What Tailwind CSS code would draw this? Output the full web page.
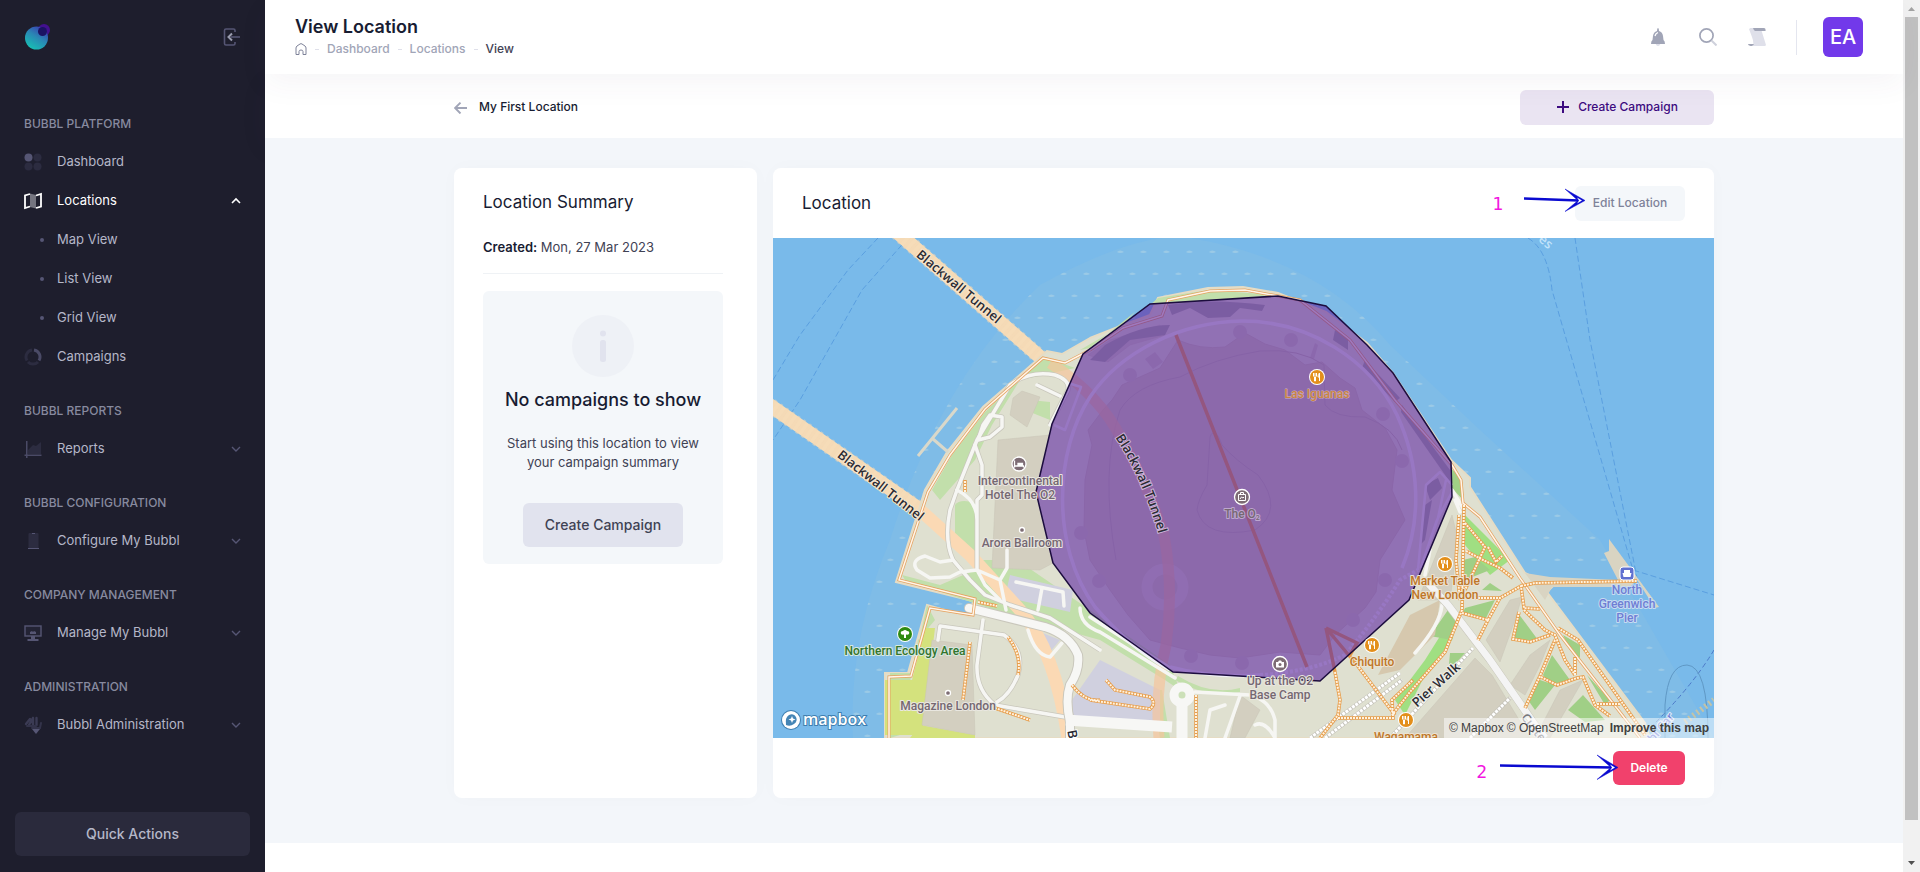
<!DOCTYPE html>
<html lang="en">
<head>
    <meta charset="UTF-8">
    <meta name="viewport" content="width=device-width, initial-scale=1.0">
    <title>View Location</title>
    <script src="https://cdn.jsdelivr.net/npm/@tailwindcss/browser@4"></script>
</head>
<body class="flex min-h-screen bg-white font-['Inter',sans-serif] text-[13px] text-[#181c32]">

    <!-- Sidebar -->
    <aside class="flex w-[265px] shrink-0 flex-col bg-[#1e1e2d]">
        <div class="flex h-[74px] items-center justify-between pr-6 pl-6">
            <a href="#" aria-label="Bubbl">
                <svg class="h-7 w-7" viewBox="0 0 28 28">
                    <defs>
                        <linearGradient id="logo" x1="0.2" y1="1" x2="0.8" y2="0">
                            <stop offset="0" stop-color="#16c5b4"/>
                            <stop offset="0.55" stop-color="#2a86b4"/>
                            <stop offset="1" stop-color="#3c34b0"/>
                        </linearGradient>
                    </defs>
                    <circle cx="20" cy="7" r="6" fill="#43108f"/>
                    <circle cx="12.500" cy="15" r="11.500" fill="url(#logo)"/>
                    <circle cx="18.500" cy="8.500" r="4.500" fill="#1b1263"/>
                </svg>
            </a>
            <button type="button" aria-label="Collapse menu">
                <svg class="h-[18px] w-[18px]" viewBox="0 0 18 18" fill="none">
                    <path d="M12 4V2.500Q12 1 10.500 1H3Q1.500 1 1.500 2.500V15.500Q1.500 17 3 17H10.500Q12 17 12 15.500V14" stroke="#565674" stroke-width="1.600"/>
                    <path d="M8 9h9" stroke="#565674" stroke-width="1.600"/>
                    <path d="M9 5.500 5.500 9 9 12.500" stroke="#9a9cae" stroke-width="2"/>
                </svg>
            </button>
        </div>

        <nav class="flex-1 pt-[15px] text-[#b5b7c8]">
            <h2 class="px-6 pt-[25px] pb-2 text-xs leading-5 font-medium text-[#878a9f]">BUBBL PLATFORM</h2>
            <a href="#" class="flex h-[39px] items-center px-6">
                <svg class="mr-[15px] h-[18px] w-[18px]" viewBox="0 0 18 18" fill="#2c2c40"><circle cx="4.500" cy="4.500" r="4" fill="#565674"/><circle cx="13.500" cy="4.500" r="4"/><circle cx="4.500" cy="13.500" r="4"/><circle cx="13.500" cy="13.500" r="4"/></svg>
                Dashboard
            </a>
            <a href="#" class="flex h-[39px] items-center px-6 text-white">
                <svg class="mr-[15px] h-[18px] w-[18px]" viewBox="0 0 18 18" fill="none"><path d="M6 1.500 12 3V16.500L6 15Z" fill="#74747f"/><path d="M6 2 1 3.500V16L6 14.500M12 3.500 17 2V14.500L12 16" stroke="#fff" stroke-width="1.800"/></svg>
                <span class="flex-1">Locations</span>
                <svg class="h-2 w-[10px]" viewBox="0 0 10 8" fill="none" stroke="#fff" stroke-width="1.600"><path d="M1 6l4-4 4 4"/></svg>
            </a>
            <a href="#" class="flex h-[39px] items-center gap-[13px] pl-10"><span class="h-1 w-1 rounded-full bg-[#565674]"></span>Map View</a>
            <a href="#" class="flex h-[39px] items-center gap-[13px] pl-10"><span class="h-1 w-1 rounded-full bg-[#565674]"></span>List View</a>
            <a href="#" class="flex h-[39px] items-center gap-[13px] pl-10"><span class="h-1 w-1 rounded-full bg-[#565674]"></span>Grid View</a>
            <a href="#" class="flex h-[39px] items-center px-6">
                <svg class="mr-[15px] h-[18px] w-[18px]" viewBox="0 0 18 18" fill="none" stroke-width="3"><path d="M10 2A7 7 0 0 1 15 12.500" stroke="#4a4a66"/><path d="M14 14A7 7 0 0 1 4 14" stroke="#2c2c40"/><path d="M3 12.500A7 7 0 0 1 8 2" stroke="#2c2c40"/></svg>
                Campaigns
            </a>

            <h2 class="px-6 pt-[25px] pb-2 text-xs leading-5 font-medium text-[#878a9f]">BUBBL REPORTS</h2>
            <a href="#" class="flex h-[39px] items-center px-6">
                <svg class="mr-[15px] h-[18px] w-[18px]" viewBox="0 0 18 18"><path d="M4 14V10L9 5 12 6 17 2V14Z" fill="#2c2c40"/><path d="M2 1h1.500v13.500H17.500V16H3.500v2H2V16H.500V14.500H2Z" fill="#4a4a66"/></svg>
                <span class="flex-1">Reports</span>
                <svg class="h-2 w-[10px]" viewBox="0 0 10 8" fill="none" stroke="#565674" stroke-width="1.400"><path d="M1 2l4 4 4-4"/></svg>
            </a>

            <h2 class="px-6 pt-[25px] pb-2 text-xs leading-5 font-medium text-[#878a9f]">BUBBL CONFIGURATION</h2>
            <a href="#" class="flex h-[39px] items-center px-6">
                <svg class="mr-[15px] h-[18px] w-[18px]" viewBox="0 0 18 18"><rect x="4.500" y="1" width="10" height="16" rx="1" fill="#2c2c40"/><path d="M4 16h11v1H4ZM8 1h3v1H8Z" fill="#565674"/></svg>
                <span class="flex-1">Configure My Bubbl</span>
                <svg class="h-2 w-[10px]" viewBox="0 0 10 8" fill="none" stroke="#565674" stroke-width="1.400"><path d="M1 2l4 4 4-4"/></svg>
            </a>

            <h2 class="px-6 pt-[25px] pb-2 text-xs leading-5 font-medium text-[#878a9f]">COMPANY MANAGEMENT</h2>
            <a href="#" class="flex h-[39px] items-center px-6">
                <svg class="mr-[15px] h-[18px] w-[18px]" viewBox="0 0 18 18" fill="none"><rect x="1" y="2" width="16" height="10" fill="#232334" stroke="#565674" stroke-width="1.400"/><path d="M6 10V8l2-1 1 1 1-1 2 1v2Z" fill="#565674"/><path d="M7 12h4v3h3.500V17h-11v-2H7Z" fill="#565674"/></svg>
                <span class="flex-1">Manage My Bubbl</span>
                <svg class="h-2 w-[10px]" viewBox="0 0 10 8" fill="none" stroke="#565674" stroke-width="1.400"><path d="M1 2l4 4 4-4"/></svg>
            </a>

            <h2 class="px-6 pt-[25px] pb-2 text-xs leading-5 font-medium text-[#878a9f]">ADMINISTRATION</h2>
            <a href="#" class="flex h-[39px] items-center px-6">
                <svg class="mr-[15px] h-[18px] w-[18px]" viewBox="0 0 18 18" fill="none" stroke-linecap="round"><path d="M2 8 6 3M5 9 9 2M9 9V2M12.500 9V2" stroke="#3b3b54" stroke-width="2.400"/><path d="M8 12H16L17 7M3 10H12" stroke="#33334a" stroke-width="2"/><path d="M8 13h8l-4 5Z" fill="#565674"/></svg>
                <span class="flex-1">Bubbl Administration</span>
                <svg class="h-2 w-[10px]" viewBox="0 0 10 8" fill="none" stroke="#565674" stroke-width="1.400"><path d="M1 2l4 4 4-4"/></svg>
            </a>
        </nav>

        <div class="px-[15px] pb-4">
            <button type="button" class="h-11 w-full rounded-md bg-[#2a2a3c] text-sm font-medium text-[#b5b7c8]">Quick Actions</button>
        </div>
    </aside>

    <!-- Page -->
    <div class="flex min-w-0 flex-1 flex-col">
        <header class="relative z-10 flex h-[74px] items-center justify-between bg-white pr-10 pl-[30px] shadow-[0_10px_30px_0_rgba(82,63,105,0.05)]">
            <div>
                <h1 class="text-lg leading-6 font-semibold">View Location</h1>
                <nav aria-label="Breadcrumb" class="flex h-[21px] items-center gap-[6px] text-xs font-medium text-[#a1a5b7]">
                    <a href="#" aria-label="Home"><svg class="h-3 w-3" viewBox="0 0 12 12" fill="none" stroke="#7e8299"><path d="M1 5Q1 4 2 3L5 1Q6 .300 7 1L10 3Q11 4 11 5V11.500H8V8.500Q8 7 6 7T4 8.500V11.500H1Z"/></svg></a>
                    <span class="mx-[2px] h-px w-1 bg-[#dfe0ea]"></span>
                    <a href="#">Dashboard</a>
                    <span class="mx-[2px] h-px w-1 bg-[#dfe0ea]"></span>
                    <a href="#">Locations</a>
                    <span class="mx-[2px] h-px w-1 bg-[#dfe0ea]"></span>
                    <span class="text-[#3f4254]">View</span>
                </nav>
            </div>
            <div class="flex items-center">
                <button type="button" aria-label="Notifications" class="mr-[33px]">
                    <svg class="h-[18px] w-4" viewBox="0 0 16 18"><path d="M5.500 15h5Q10 18 8 18T5.500 15Z" fill="#dfe0ea"/><path d="M8 0Q9 0 9 3Q12.500 4 13 8L13.500 12Q15 13 15 16H1Q1 13 2.500 12L3 8Q3.500 4 7 3Q7 0 8 0Z" fill="#a1a5b7"/><path d="M5 8Q5.500 5.500 8 4.500" stroke="#fff" stroke-width="1.300" fill="none"/></svg>
                </button>
                <button type="button" aria-label="Search" class="mr-[31px]">
                    <svg class="h-[18px] w-[18px]" viewBox="0 0 18 18" fill="none"><circle cx="7.500" cy="7.500" r="6.600" stroke="#a1a5b7" stroke-width="1.700"/><path d="m12.500 12.500 5 5" stroke="#cfd1dc" stroke-width="2"/></svg>
                </button>
                <button type="button" aria-label="Activity" class="mr-[30px]">
                    <svg class="h-[18px] w-[18px]" viewBox="0 0 18 18"><path d="M1 1Q3-1 7 0L13 1 18 17Q17 19 14 18H5Q6 14 4 9Z" fill="#dfe0ea"/><path d="M5 0H16Q18 0 17.500 3H7Q6 3 5 0ZM0 16H6Q5 18.500 2.500 18T0 16Z" fill="#a1a5b7"/></svg>
                </button>
                <div class="mr-[26px] h-[35px] w-px bg-[#e4e6ef]"></div>
                <button type="button" class="h-10 w-10 rounded-md bg-[#7239ea] text-xl font-medium text-white">EA</button>
            </div>
        </header>

        <div class="bg-white px-5 shadow-[0_10px_30px_0_rgba(82,63,105,0.05)]">
            <div class="mx-auto flex h-16 max-w-[1260px] items-center justify-between pt-[2px]">
                <a href="#" class="flex items-center gap-3 text-xs font-medium">
                    <svg class="h-[13px] w-[13px]" viewBox="0 0 12 12" fill="none" stroke="#a1a5b7" stroke-width="1.800"><path d="M12 6.500H1M6 1.500l-5 5 5 5"/></svg>
                    My First Location
                </a>
                <button type="button" class="flex h-[35px] w-[194px] items-center justify-center gap-2 rounded-md bg-[#eae4f2] text-xs font-medium text-[#3d0b80]">
                    <svg class="h-[14px] w-[14px]" viewBox="0 0 14 14" stroke="#3d0b80" stroke-width="2"><path d="M7 1v12M1 7h12"/></svg>
                    Create Campaign
                </button>
            </div>
        </div>

        <main class="bg-[#f3f6fa] px-5 pt-[30px] pb-[45px]">
            <div class="mx-auto grid max-w-[1260px] grid-cols-4 gap-4">
                <section class="rounded-lg bg-white pt-[21px] pr-[34px] pl-[29px] shadow-[0_0_20px_0_rgba(76,87,125,0.02)]">
                    <h2 class="text-[17px] leading-[26px]">Location Summary</h2>
                    <p class="mt-[22px] leading-5 text-[#3f4254]"><strong class="font-semibold text-[#181c32]">Created:</strong> Mon, 27 Mar 2023</p>
                    <hr class="mt-4 border-[#eff2f5]">
                    <div class="mt-[17px] flex flex-col items-center rounded-md bg-[#f4f7fa] px-4 pt-6 pb-[17px] text-center">
                        <svg class="h-[62px] w-[62px]" viewBox="0 0 62 62"><circle cx="31" cy="31" r="31" fill="#eef1f6"/><circle cx="31" cy="18.500" r="3" fill="#e1e3ee"/><rect x="28" y="25" width="6" height="22" rx="2.500" fill="#e1e3ee"/></svg>
                        <h3 class="mt-[11px] text-lg leading-6 font-medium">No campaigns to show</h3>
                        <p class="mt-[22px] leading-[19px] text-[#3f4254]">Start using this location to view<br>your campaign summary</p>
                        <button type="button" class="mt-[31px] h-11 w-40 rounded-md bg-[#e1e3ee] text-sm font-medium text-[#3f4254]">Create Campaign</button>
                    </div>
                </section>

                <section class="col-span-3 rounded-lg bg-white shadow-[0_0_20px_0_rgba(76,87,125,0.02)]">
                    <div class="relative flex h-[70px] items-center justify-between pr-[29px] pl-[29px]">
                        <h2 class="text-[17px] leading-[26px]">Location</h2>
                        <button type="button" class="h-[35px] w-[110px] rounded-md bg-[#f4f7fa] text-xs font-medium text-[#7e8299]">Edit Location</button>
                        <span class="absolute top-6 right-[211px] font-['DejaVu_Sans_Mono',monospace] text-lg leading-6 text-[#f216e0]">1</span>
                        <svg class="absolute top-5 right-[128px] h-6 w-[62px]" viewBox="0 0 62 24" fill="none"><path d="M0 10.500 55 12.500" stroke="#0a0ad0" stroke-width="2.500"/><path d="M41 1 61 12.500 41 23.500 54 12.500Z" fill="#0a0ad0" stroke="#0a0ad0" stroke-width="0.500"/><path d="m53 9.500 5 3-5 3 2-3Z" fill="#fff"/></svg>
                    </div>

                    <!-- Map -->
                    <div class="relative h-[500px] overflow-hidden bg-[#79baea]">
                        <svg class="h-full w-full" viewBox="773 238 941 500" preserveAspectRatio="xMidYMid slice" role="img" aria-label="Map of the location">
                            <defs>
                                <pattern id="mud" x="0" y="0" width="23" height="44" patternUnits="userSpaceOnUse">
                                    <path d="M2 10Q5 7 9 10Q5 12 2 10ZM13 32Q16 29 20 32Q16 34 13 32Z" fill="#a3cde6" opacity="0.8"/>
                                </pattern>
                                <g id="food">
                                    <circle r="8" fill="#fff"/><circle r="7" fill="#e38f1b"/>
                                    <path d="M-3.500-4v3l1 1v4h1V0l1-1V-4M-2-4v3M2.500 4V-4Q1-3 1 0H2.500" stroke="#fff" fill="none"/>
                                </g>
                                <path id="tunnel" d="M1110 430Q1143 476 1161 543"/>
                            </defs>

                            <!-- River shallows -->
                            <path d="M853 738Q848 640 890 540Q940 380 1040 285Q1140 230 1190 238Q1320 260 1390 345L1480 430L1600 540L1714 738Z" fill="#7fbce7"/>
                            <path d="M853 738Q848 640 890 540Q940 380 1040 285Q1140 230 1190 238Q1320 260 1390 345L1480 430L1600 540L1714 738Z" fill="url(#mud)"/>
                            <g fill="none" stroke="#5a9fe0" stroke-dasharray="6 3">
                                <path d="M878 238L848 270L800 335L773 380M908 238L862 290L800 400L773 440"/>
                                <path d="M1528 238Q1548 250 1552 290L1633 570L1714 595M1575 238L1590 340L1637 578"/>
                            </g>
                            <path d="M1714 650Q1690 690 1640 738" fill="none" stroke="#4c79c9" stroke-dasharray="5 3"/>
                            <path d="M1665 738V705Q1668 665 1687 665Q1708 666 1708 738" fill="none" stroke="#5f98c5"/>
                            <path d="M1685 722L1714 700" fill="none" stroke="#c5c3a5" stroke-width="6" stroke-dasharray="2 3"/>

                            <!-- Tunnel approaches over the water -->
                            <path d="M897 232L1064 378M765 402L925 513" stroke="#f6dcb8" stroke-width="14" fill="none"/>
                            <path d="M897 232L1064 378M765 402L925 513" stroke="#f3d8b4" stroke-width="16" stroke-dasharray="3 4" fill="none" opacity="0.500"/>

                            <!-- Land -->
                            <path d="M1090 338L1062 354L1047 351L1037 360L983 407L947 452L925 490L896 582L973 601L970 617L927 605L908 673H885V738H1650L1645 723L1547 592L1552 587L1525 573L1470 487V478L1451 460L1393 373L1367 343L1326 312L1278 293L1243 287L1208 288L1158 298L1150 315L1123 325Z" fill="#dfe0d0" stroke="#e6dcc4" stroke-width="2"/>
                            <path d="M1525 573L1550 577L1618 580L1604 553L1609 551V539L1659 607L1655 608L1637 580L1630 587L1552 587L1545 600Z" fill="#d9d4c2"/>

                            <!-- Parks -->
                            <g fill="#c2dfab">
                                <path d="M1044 357L1075 368L1020 380L992 425L975 460L940 500L932 490L952 455L985 412Z"/>
                                <path d="M955 505Q960 498 975 503V565L955 545Z"/>
                                <path d="M902 575L940 585L1010 555L1090 610L1170 665L1180 690L1165 680L1100 640L1010 615L905 580Z"/>
                                <path d="M1158 298L1208 290L1275 295L1150 305ZM1080 350L1123 325L1135 312L1090 348Z"/>
                                <path d="M980 560L990 575L1000 580V560Z"/>
                                <path d="M1030 400L1050 402V420L1030 412ZM1152 690H1162L1170 738H1160Z"/>
                                <path d="M1178 676Q1210 696 1240 688V692Q1205 698 1175 680Z"/>
                                <path d="M927 605L912 673H890V738L900 735L918 640L935 620Z"/>
                            </g>
                            <path d="M925 628H935L922 735H885V680H912Z" fill="#d4e27d"/>
                            <path d="M920 725L975 735V738H910Z" fill="#d4e27d"/>
                            <g fill="#a0cf86">
                                <path d="M1465 515L1510 560L1490 575L1465 545Z" fill="#a0df82"/>
                                <path d="M1463 560L1475 557L1490 570L1465 580ZM1482 590L1490 583L1502 591Z"/>
                                <path d="M1465 608L1495 600L1485 620L1462 614Z"/>
                                <path d="M1447 625L1458 615L1452 640L1425 675L1405 715L1395 700L1425 660Z" fill="#a0df82"/>
                                <path d="M1518 613L1538 640L1514 640ZM1552 655L1570 680L1550 685L1543 675ZM1540 680L1555 685L1535 710L1528 700ZM1583 695L1605 720L1585 722L1568 710ZM1450 653H1465L1455 664H1449ZM1563 635L1580 645V658L1570 650ZM1587 675L1610 700L1605 705Z"/>
                                <path d="M1451 468L1462 480L1463 500L1452 488ZM1448 610L1460 615L1452 640L1430 636Z"/>
                            </g>

                            <!-- Buildings and yards -->
                            <g fill="#d3cfc0" stroke="#c9c5b6" stroke-width="0.500">
                                <path d="M1013 398L1022 391L1040 397L1027 427L1010 415Z"/>
                                <path d="M998 440L1050 435L1036 492L1053 563L1040 570L992 568Z"/>
                                <path d="M932 640L972 645L975 735L922 725Z"/>
                                <path d="M1486 640L1510 600L1522 597L1515 620L1500 662Z"/>
                                <path d="M1525 695L1510 685L1530 655L1550 640L1540 665Z"/>
                                <path d="M1535 738L1560 690L1583 680L1560 720L1550 738Z"/>
                                <path d="M1240 695L1260 710L1245 738H1230ZM1405 738L1475 658L1492 675L1530 738ZM1418 600L1452 515L1458 540L1450 600Z"/>
                                <path d="M1088 355L1110 340L1160 325L1165 335L1130 345L1108 362Z"/>
                            </g>
                            <path d="M1378 675L1410 615L1440 600L1435 635L1400 670Z" fill="#d6c8ae"/>
                            <g fill="#d0d0df">
                                <path d="M1010 575L1073 590L1070 612L1005 597ZM1072 700L1100 660L1160 690V725L1068 715Z"/>
                                <path d="M1035 630L1060 640L1045 658Q1030 650 1035 630Z"/>
                            </g>

                            <!-- Arena -->
                            <path d="M1085 480L1092 445L1088 430L1103 410L1112 400L1122 385L1160 368L1178 340Q1200 350 1225 347L1245 333L1265 344L1285 350L1305 365L1322 362L1340 378L1355 388L1362 410L1385 428L1397 450L1392 490L1405 520L1380 560L1376 592L1365 608L1335 635L1320 655L1280 652L1240 658L1210 655L1180 648L1150 640L1128 615L1110 590L1090 560L1084 530Z" fill="#d2cdb9" stroke="#cdc6b4"/>
                            <g fill="#cfcabf">
                                <circle cx="1240" cy="332" r="7"/><circle cx="1291" cy="340" r="7"/><circle cx="1130" cy="375" r="7"/><circle cx="1383" cy="414" r="7"/><circle cx="1402" cy="461" r="7"/><circle cx="1099" cy="581" r="7"/><circle cx="1191" cy="656" r="7"/><circle cx="1242" cy="663" r="7"/><circle cx="1353" cy="620" r="7"/><circle cx="1385" cy="580" r="7"/><circle cx="1081" cy="533" r="7"/>
                                <path d="M1145 359L1155 352L1163 362L1153 369ZM1310 358L1315 343L1318 345L1314 359Z"/>
                            </g>
                            <path d="M1168 305Q1210 298 1265 305L1262 311L1240 308L1230 317L1208 318L1190 308L1172 315ZM1105 345Q1140 325 1170 325L1165 335L1130 340L1105 362L1090 360ZM1335 330L1348 338V350L1333 340ZM1365 360L1400 398L1395 402L1362 368ZM1402 405L1450 470V482L1401 412Z" fill="#a9aea4"/>
                            <path d="M1425 485L1438 478L1442 488L1430 500ZM1425 505L1432 500L1425 540L1420 545Z" fill="#a9aea4"/>
                            <circle cx="1165" cy="587" r="18" fill="none" stroke="#dcd8ca" stroke-width="11"/>
                            <g fill="none" stroke="#c3bcae">
                                <path d="M1116 560Q1100 470 1120 410Q1135 385 1180 377Q1215 358 1260 351Q1300 348 1324 365L1325 405Q1335 418 1365 417Q1395 428 1402 450"/>
                                <path d="M1207 485L1210 437Q1215 425 1222 445Q1235 460 1258 475Q1285 510 1255 530Q1205 540 1197 510Q1198 500 1207 485Z"/>
                            </g>

                            <!-- Tunnel under the arena -->
                            <path d="M1050 363Q1100 395 1122 440Q1150 490 1164 535Q1174 590 1166 645Q1155 690 1159 738" fill="none" stroke="#f5c59c" stroke-width="11" opacity="0.700"/>
                            <path d="M920 510L970 555L1020 610Q1055 650 1068 738" fill="none" stroke="#fbd9b4" stroke-width="13"/>

                            <!-- Roads -->
                            <g fill="none" stroke="#c9c7bc" stroke-width="5" stroke-linejoin="round">
                                <path d="M957 490Q965 470 977 440L1010 385Q1030 370 1055 375Q1070 380 1068 390L1050 425M1037 385L1060 396"/>
                                <path d="M978 440L983 425L990 415L1002 417V427L990 437L978 440M975 445L982 465V495L977 500V570"/>
                                <path d="M957 490L950 510Q944 540 953 560L970 580L985 595L1010 605L1050 618L1100 650M983 620L977 665Q976 690 995 705L1065 717M938 640L940 626L1004 635Q1025 650 1018 675Q1010 695 997 702"/>
                            </g>
                            <g fill="none" stroke="#f6f6f3" stroke-width="3.500" stroke-linejoin="round" stroke-linecap="round">
                                <path d="M957 490Q965 470 977 440L1010 385Q1030 370 1055 375Q1070 380 1068 390L1050 425M1037 385L1060 396"/>
                                <path d="M978 440L983 425L990 415L1002 417V427L990 437L978 440M975 445L982 465V495L977 500V570M957 490Q977 500 977 520"/>
                                <path d="M957 490L950 510Q944 540 953 560L970 580L985 595L1010 605L1050 618L1100 650"/>
                                <path d="M953 560L940 562L925 556Q910 560 917 570L930 578L950 577L960 572L977 570L1000 580L1006 610M1000 580L1007 568V550M977 570L985 585L1000 600"/>
                                <path d="M1016 582L1063 592L1064 606M1042 588L1038 610M983 620L977 665Q976 690 995 705L1065 717M938 640L940 626L1004 635Q1025 650 1018 675Q1010 695 997 702"/>
                                <path d="M1028 630Q1035 655 1050 657L1062 643M1080 608Q1080 625 1100 632L1175 678M1090 617L1170 668M1195 692L1250 695Q1270 700 1275 720V738M1205 738L1210 710L1225 705M1240 696L1225 738M1255 725Q1265 720 1275 738"/>
                                <path d="M1452 490L1463 508M1455 500L1460 512M1415 653Q1440 625 1442 605M1430 550L1425 575"/>
                            </g>
                            <path d="M969 608L1045 627Q1070 635 1078 655Q1080 670 1070 685Q1065 700 1070 722V738" fill="none" stroke="#c9c7bc" stroke-width="10" stroke-linecap="round"/>
                            <path d="M969 608L1045 627Q1070 635 1078 655Q1080 670 1070 685Q1065 700 1070 722V738" fill="none" stroke="#f7f7f5" stroke-width="8" stroke-linecap="round"/>
                            <path d="M1066 720L1172 727M1182 700V738" fill="none" stroke="#f7f7f5" stroke-width="11"/>
                            <circle cx="1182" cy="695" r="8" fill="#cce0b8" stroke="#f7f7f5" stroke-width="9"/>
                            <path d="M1425 580L1448 605L1490 660L1535 725L1545 738" fill="none" stroke="#c9c7bc" stroke-width="8"/>
                            <path d="M1425 580L1448 605L1490 660L1535 725L1545 738" fill="none" stroke="#f4f4f4" stroke-width="7"/>
                            <path d="M1390 738L1473 648M1310 738L1400 673M1325 738L1402 680M1470 738L1510 698" fill="none" stroke="#c3c1b8" stroke-width="4"/>
                            <path d="M1390 738L1473 648M1310 738L1400 673M1325 738L1402 680M1470 738L1510 698" fill="none" stroke="#fff" stroke-width="3" stroke-dasharray="3 1"/>

                            <!-- Arena ring road and service roads -->
                            <g fill="none" stroke="#f1f0f6" stroke-width="3.500" stroke-linejoin="round">
                                <path d="M1401 718"/>
                                <path d="M1170 670Q1130 648 1095 607C1050 545 1055 450 1090 397C1120 352 1180 322 1242 321C1310 321 1370 360 1397 415C1420 465 1422 520 1402 568"/>
                                <path d="M1170 667Q1210 678 1260 675"/>
                                <path d="M1068 383L1081 387L1065 430L1054 425M1418 570L1426 485L1440 472L1452 485M1452 492L1437 520L1421 567L1438 518L1446 480" stroke-width="2.500"/>
                            </g>
                            <path d="M1260 675Q1310 672 1345 655Q1375 620 1400 580L1418 570" fill="none" stroke="#f1f0f6" stroke-width="4" stroke-dasharray="3 2"/>

                            <!-- Promenade -->
                            <g fill="none" stroke="#e6a260" stroke-width="3">
                                <path d="M1090 350L1065 363L1043 358L985 409L950 455L928 492L899 580L975 599L973 615L930 608L911 676L889 677V738"/>
                                <path d="M1090 350L1123 328L1162 316L1168 300L1210 291L1245 290L1300 300L1350 340L1395 400L1452 465L1461 480L1463 503L1480 517L1520 578L1560 635L1640 738"/>
                            </g>
                            <g fill="none" stroke="#fff6ea" stroke-width="1.500">
                                <path d="M1090 350L1065 363L1043 358L985 409L950 455L928 492L899 580L975 599L973 615L930 608L911 676L889 677V738"/>
                                <path d="M1090 350L1123 328L1162 316L1168 300L1210 291L1245 290L1300 300L1350 340L1395 400L1452 465L1461 480L1463 503L1480 517L1520 578L1560 635L1640 738"/>
                            </g>

                            <!-- Footpaths, casing then dashes -->
                            <g fill="none" stroke="#e79d4b" stroke-width="3.500">
                                <path id="walks" d="M1464 505L1462 610L1445 652L1410 692L1392 715M1459 515L1456 560L1460 600M1465 523L1485 547L1465 590M1466 551L1483 560L1500 568L1513 578M1488 547L1496 562L1502 556M1521 586L1535 583L1637 581M1475 598H1500L1521 586L1524 608L1540 609M1462 613L1488 620L1500 598M1488 620L1478 640M1519 612L1513 639L1530 642L1550 635M1524 610L1545 630L1555 635L1565 660L1575 675M1555 640L1540 676L1525 708M1541 677L1557 685L1577 678L1583 677L1595 705L1610 716M1575 675V657M1597 704H1620M1558 628L1578 640L1645 735"/>
                                <path id="lanes" d="M1335 672L1340 700L1338 715L1320 738M1357 665L1395 715M1338 718H1393L1392 700L1413 680M1196 695V738M965 492V480M978 602L997 606M970 642L963 700M995 708L1030 720"/>
                                <path id="arena-walks" d="M1176 335L1307 667M1326 628L1335 672M1326 628L1357 665M1326 628L1357 643L1350 655"/>
                                <path id="yard" d="M1106 680L1115 690L1150 697Q1157 703 1150 709L1090 700M1072 685Q1085 702 1100 700M1018 675Q1022 655 1008 637"/>
                            </g>
                            <g fill="none" stroke="#fff3e0" stroke-width="2" stroke-dasharray="2 1">
                                <path d="M1464 505L1462 610L1445 652L1410 692L1392 715M1459 515L1456 560L1460 600M1465 523L1485 547L1465 590M1466 551L1483 560L1500 568L1513 578M1488 547L1496 562L1502 556M1521 586L1535 583L1637 581M1475 598H1500L1521 586L1524 608L1540 609M1462 613L1488 620L1500 598M1488 620L1478 640M1519 612L1513 639L1530 642L1550 635M1524 610L1545 630L1555 635L1565 660L1575 675M1555 640L1540 676L1525 708M1541 677L1557 685L1577 678L1583 677L1595 705L1610 716M1575 675V657M1597 704H1620M1558 628L1578 640L1645 735"/>
                                <path d="M1335 672L1340 700L1338 715L1320 738M1357 665L1395 715M1338 718H1393L1392 700L1413 680M1196 695V738M965 492V480M978 602L997 606M970 642L963 700M995 708L1030 720"/>
                                <path d="M1106 680L1115 690L1150 697Q1157 703 1150 709L1090 700M1072 685Q1085 702 1100 700M1018 675Q1022 655 1008 637"/>
                            </g>
                            <path d="M957 408L918 456M933 439L948 452" stroke="#d9d8ca" stroke-width="3"/>

                            <!-- Geofence -->
                            <path d="M1150 304L1278 296L1326 306L1367 345L1393 373L1451 462L1452 497L1409 600L1320 681L1173 672L1090 613L1053 563L1036 492L1052 424L1083 354Z" fill="#5e27a1" fill-opacity="0.600" stroke="#1c0d3e" stroke-width="1.500"/>

                            <!-- Road names -->
                            <g font-family="Open Sans, sans-serif" font-size="13" fill="#2b2b33" text-anchor="middle" stroke="#f6e6cf" stroke-width="2" paint-order="stroke" font-weight="600">
                                <text transform="translate(956 290) rotate(40)">Blackwall Tunnel</text>
                                <text transform="translate(878 489) rotate(38)">Blackwall Tunnel</text>
                                <text stroke="#cbb5d8"><textPath href="#tunnel" startOffset="50%">Blackwall Tunnel</textPath></text>
                                <text transform="translate(1439 688) rotate(-42)" stroke="#eeeee6">Pier Walk</text>
                                <text transform="translate(1068 735) rotate(80)" stroke="#fff">B</text>
                                <text transform="translate(1532 732) rotate(52)" fill="#77777c" stroke="#eee" font-size="12">Cutter</text>
                                <text transform="translate(1543 245) rotate(40)" fill="#c4e4fa" stroke="none">es</text>
                                <text transform="translate(1664 730) rotate(-50)" fill="#7284d8" stroke="#dfeaf8" font-size="12">bl Car</text>
                            </g>

                            <!-- Places -->
                            <g font-family="Roboto, sans-serif" font-size="12" font-weight="500" text-anchor="middle" stroke-width="2" paint-order="stroke" stroke-linejoin="round">
                                <g fill="#756872" stroke="#e9e7e0">
                                    <text x="1020" y="485">Intercontinental</text>
                                    <text x="1020" y="499">Hotel The O2</text>
                                    <text x="1022" y="547">Arora Ballroom</text>
                                    <text x="948" y="710">Magazine London</text>
                                    <text x="1280" y="685">Up at the O2</text>
                                    <text x="1280" y="699">Base Camp</text>
                                    <text x="1242" y="518" stroke="#bda6cf">The O<tspan font-size="7" dy="2">2</tspan></text>
                                </g>
                                <text x="905" y="655" fill="#33742d" stroke="#d8e8e0">Northern Ecology Area</text>
                                <g fill="#be7628" stroke="#ece3d2">
                                    <text x="1317" y="398" fill="#c98440" stroke="#cdb0c4" stroke-width="1">Las Iguanas</text>
                                    <text x="1445" y="585">Market Table</text>
                                    <text x="1445" y="599">New London</text>
                                    <text x="1372" y="666">Chiquito</text>
                                    <text x="1406" y="741">Wagamama</text>
                                </g>
                                <g fill="#6e7ed4" stroke="#c6dbf2">
                                    <text x="1627" y="594">North</text>
                                    <text x="1627" y="608">Greenwich</text>
                                    <text x="1627" y="622">Pier</text>
                                </g>
                            </g>
                            <use href="#food" x="1317" y="377"/>
                            <use href="#food" x="1445" y="564"/>
                            <use href="#food" x="1372" y="645"/>
                            <use href="#food" x="1406" y="720"/>
                            <g fill="#7d6c74" stroke="#fff" stroke-width="1.300">
                                <circle cx="1019" cy="464" r="7"/><circle cx="1242" cy="497" r="7.500"/><circle cx="1280" cy="664" r="7.500"/>
                                <circle cx="1022" cy="530" r="2.500"/><circle cx="948" cy="693" r="2.500"/>
                            </g>
                            <path d="M1014.500 460.500v7M1014.500 466h9v1.500M1018 463.500h4.500v1.500h-4.500Z" fill="none" stroke="#fff" stroke-width="1.300"/>
                            <path d="M1238.500 494.500h7v6h-7ZM1240.500 494v-1.500h3v1.500M1240 499l1.500-2 1.500 1 1-1" fill="none" stroke="#fff"/>
                            <path d="M1276 662h2l1-1.500h2l1 1.500h2v5.500h-8Z" fill="#fff"/>
                            <circle cx="1280" cy="664.500" r="1.500" fill="#7d6c74"/>
                            <circle cx="905" cy="634" r="8" fill="#fff"/><circle cx="905" cy="634" r="7" fill="#2f8a12"/>
                            <path d="M901 634Q900 631 903 631Q905 629 907 631Q910 631 909 634Q908 635 906 634.500V638H904V634.500Q902 635 901 634Z" fill="#fff"/>
                            <rect x="1620" y="567" width="14" height="13" rx="3" fill="#6070d0" stroke="#fff"/>
                            <path d="M1624 570h6v3h1.500l-1 4h-7l-1-4h1.500Z" fill="#fff"/>

                            <!-- Map provider logo -->
                            <g stroke="#3f7fb0" stroke-width="2" paint-order="stroke">
                                <circle cx="791" cy="720" r="9" fill="#fff"/>
                                <text x="803" y="725" font-family="Open Sans, sans-serif" font-size="16" font-weight="600" fill="#fff">mapbox</text>
                            </g>
                            <path d="M786 725Q785 717 789 715Q794 713 796 717T794 724Q790 727 786 725Z" fill="#4585b5"/>
                            <path d="m792 716 1 2.500 2.500 1-2.500 1-1 2.500-1-2.500-2.500-1 2.500-1Z" fill="#fff"/>
                        </svg>
                        <div class="absolute right-0 bottom-0 flex h-5 items-center gap-[3px] bg-white/50 px-[5px] font-['Liberation_Sans',sans-serif] text-xs text-[#404040]">
                            <a href="#">© Mapbox</a> <a href="#">© OpenStreetMap</a> <a href="#" class="ml-[3px] font-bold">Improve this map</a>
                        </div>
                    </div>

                    <div class="relative flex h-[60px] items-center justify-end pr-[29px]">
                        <button type="button" class="h-[34px] w-[72px] rounded-md bg-[#f1416c] text-xs font-semibold text-white">Delete</button>
                        <span class="absolute top-[22px] right-[227px] font-['DejaVu_Sans_Mono',monospace] text-lg leading-6 text-[#f216e0]">2</span>
                        <svg class="absolute top-4 right-[95px] h-[26px] w-[119px]" viewBox="0 0 119 26" fill="none"><path d="M0 11.500 112 13.500" stroke="#0a0ad0" stroke-width="2.500"/><path d="M97 1 118 13.500 97 25.500 111 13.500Z" fill="#0a0ad0" stroke="#0a0ad0" stroke-width="0.500"/><path d="m110 10.500 5 3-5 3 2-3Z" fill="#fff"/></svg>
                    </div>
                </section>
            </div>
        </main>
    </div>

    <!-- Scroll track -->
    <div class="flex w-[17px] shrink-0 flex-col items-center bg-[#f1f1f1]">
        <svg class="h-[17px] w-[17px]" viewBox="0 0 17 17"><path d="M5 11h7L8.500 7Z" fill="#a3a3a3"/></svg>
        <div class="w-[13px] flex-1 bg-[#c1c1c1]"></div>
        <svg class="mt-[35px] h-[17px] w-[17px]" viewBox="0 0 17 17"><path d="M5 6h7L8.500 10Z" fill="#505050"/></svg>
    </div>
</body>
</html>
